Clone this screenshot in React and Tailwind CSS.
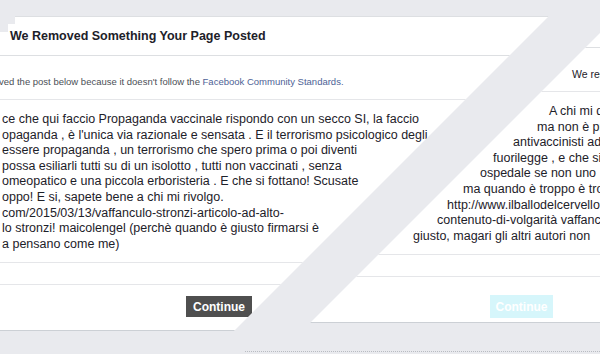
const leftLines = [
  "ce che qui faccio Propaganda vaccinale rispondo con un secco SI, la faccio",
  "opaganda , è l'unica via razionale e sensata . E il terrorismo psicologico degli",
  "essere propaganda , un terrorismo che spero prima o poi diventi",
  "possa esiliarli tutti su di un isolotto , tutti non vaccinati , senza",
  "omeopatico e una piccola erboristeria . E che si fottano! Scusate",
  "oppo! E si, sapete bene a chi mi rivolgo.",
  "com/2015/03/13/vaffanculo-stronzi-articolo-ad-alto-",
  "lo stronzi! maicolengel (perchè quando è giusto firmarsi è",
  "a pensano come me)",
];

// the wrapped-around part of each row, pushed right by the shear
const rightLines = [
  ["A chi mi dice che qui faccio", "ml-[549px]"],
  ["ma non è propaganda", "ml-[537px]"],
  ["antivaccinisti ad essere", "ml-[513px]"],
  ["fuorilegge , e che si", "ml-[493px]"],
  ["ospedale se non uno", "ml-[480px]"],
  ["ma quando è troppo è troppo", "ml-[463px]"],
  ["http://www.ilballodelcervello.", "ml-[447px]"],
  ["contenuto-di-volgarità vaffanculo", "ml-[437px]"],
  ["giusto, magari gli altri autori non", "ml-[413px]"],
];

function Dialog({ pos, title, intro, children, button }) {
  return (
    <div className={`absolute left-0 w-[600px] h-[315px] bg-white ${pos}`}>
      <div className="h-[40px] border-y border-[#dddfe2] flex items-center pl-[10px] text-[12.5px] font-bold text-[#1d2129] whitespace-nowrap">
        {title}
      </div>
      <div className="h-[44px] border-b border-[#e5e6e9] pt-[20px] text-[9.5px] leading-[12px] text-[#4b4f56] whitespace-nowrap overflow-hidden">
        {intro}
      </div>
      <div className="h-[163px] border-b border-[#e5e6e9] pt-[12px] text-[12.5px] leading-[15.6px] text-[#1d2129] whitespace-nowrap overflow-hidden">
        {children}
      </div>
      <div className="h-[22px] border-b border-[#e5e6e9]" />
      <div className="h-[46px] border-b border-[#ccd0d5]">{button}</div>
    </div>
  );
}

export default function App() {
  return (
    <div className="relative w-[600px] h-[354px] overflow-hidden bg-[#e9eaee] font-['Liberation_Sans',Arial,sans-serif]">
      <Dialog
        pos="top-[16px] [clip-path:polygon(15px_0,549px_0,234px_315px,0_315px,0_16px,8px_16px,8px_8px,15px_8px)]"
        title="We Removed Something Your Page Posted"
        intro={
          <div className="-ml-[1px]">
            ved the post below because it doesn't follow the{" "}
            <span className="text-[#4e6296]">Facebook Community Standards.</span>
          </div>
        }
        button={
          <div className="pt-[11px] pl-[186px]">
            <div className="w-[66px] h-[21px] bg-[#4f4f4f] text-white text-[12px] font-bold flex items-center justify-center">
              Continue
            </div>
          </div>
        }
      >
        {leftLines.map((line) => (
          <div key={line} className="pl-[2px]">
            {line}
          </div>
        ))}
      </Dialog>

      <Dialog
        pos="top-[8px] [clip-path:polygon(625px_0,900px_0,900px_315px,310px_315px)]"
        title=""
        intro={<div className="pl-[572px] text-[10.5px] text-[#1d2129]">We removed the post below</div>}
        button={
          <div className="pt-[18px] pl-[490px]">
            <div className="w-[63px] h-[23px] bg-[#d6f6fb] text-white text-[12px] font-bold flex items-center justify-center">
              Continue
            </div>
          </div>
        }
      >
        {rightLines.map(([text, cls]) => (
          <div key={text} className={cls}>
            {text}
          </div>
        ))}
      </Dialog>

      <div className="absolute top-[351px] left-[245px] right-0 border-t border-dotted border-[#b9bcc2]" />
    </div>
  );
}
